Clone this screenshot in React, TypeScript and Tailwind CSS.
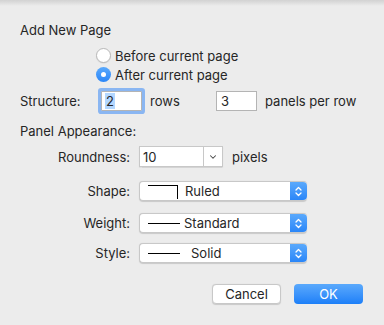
import { ChevronDown } from "lucide-react";

const font = { fontFamily: "Inter, 'Liberation Sans', sans-serif" };

function Radio({ checked, label }: { checked: boolean; label: string }) {
    return (
        <div className="flex items-center h-[19px] gap-[4px]">
            {checked ? (
                <div className="w-[15px] h-[15px] rounded-full bg-gradient-to-b from-[#5aa9fc] to-[#2a86f8] flex items-center justify-center">
                    <div className="w-[5px] h-[5px] rounded-full bg-white" />
                </div>
            ) : (
                <div className="w-[15px] h-[15px] rounded-full bg-white border border-[#b9b9b9] shadow-[0_0.5px_1px_rgba(0,0,0,0.1)]" />
            )}
            <span>{label}</span>
        </div>
    );
}

function Updown() {
    return (
        <div className="w-[17px] self-stretch rounded-r-[4px] bg-gradient-to-b from-[#5aa9fc] to-[#2a86f8] flex items-center justify-center">
            <svg width="7" height="11" viewBox="0 0 7 11" fill="none" stroke="white" strokeWidth="1.3" strokeLinecap="round" strokeLinejoin="round">
                <path d="M1 4 L3.5 1.5 L6 4" />
                <path d="M1 7 L3.5 9.5 L6 7" />
            </svg>
        </div>
    );
}

function Popup({ icon, label, textOffset }: { icon: React.ReactNode; label: string; textOffset: string }) {
    return (
        <div className="w-[168px] h-[20px] flex bg-white rounded-[4px] border border-[#c8c8c8] border-r-0 shadow-[0_0.5px_1px_rgba(0,0,0,0.15)]">
            <div className="flex-1 flex items-center pl-[8px]">
                {icon}
                <span className={textOffset}>{label}</span>
            </div>
            <Updown />
        </div>
    );
}

function Row({ label, children, mt }: { label: string; children: React.ReactNode; mt: string }) {
    return (
        <div className={`flex items-center ${mt}`}>
            <div className="w-[130px] text-right pr-[0px]">{label}</div>
            <div className="ml-[9px] flex items-center">{children}</div>
        </div>
    );
}

export default function App() {
    return (
        <div className="w-[384px] h-[325px] bg-[#ececec] text-[13px] text-[#262626] leading-[16px] flex flex-col" style={font}>
            <div className="h-[6px] bg-gradient-to-b from-[#d2d2d2] to-[#ececec]" />

            <div className="ml-[20px] mt-[16px]">Add New Page</div>

            <div className="ml-[96px] mt-[8px] flex flex-col">
                <Radio checked={false} label="Before current page" />
                <Radio checked={true} label="After current page" />
            </div>

            {/* Structure */}
            <div className="flex items-center mt-[7px] h-[20px]">
                <div className="ml-[20px] w-[81px]">Structure:</div>
                <div className="w-[41px] h-[20px] bg-white border border-[#b4b4b4] ring-[3px] ring-[#8ab6f2] rounded-[1px] flex items-center pl-[3px]">
                    <span className="bg-[#b3d7ff] px-[1px]">2</span>
                </div>
                <div className="ml-[8px] w-[66px]">rows</div>
                <div className="w-[41px] h-[20px] bg-white border border-[#b4b4b4] flex items-center pl-[4px]">3</div>
                <div className="ml-[8px]">panels per row</div>
            </div>

            <div className="ml-[20px] mt-[12px]">Panel Appearance:</div>

            <Row label="Roundness:" mt="mt-[7px]">
                <div className="w-[84px] h-[21px] flex bg-white border border-[#c8c8c8] shadow-[0_0.5px_1px_rgba(0,0,0,0.1)]">
                    <div className="flex-1 flex items-center pl-[3px]">10</div>
                    <div className="w-[19px] border-l border-[#c8c8c8] flex items-center justify-center">
                        <ChevronDown className="w-[10px] h-[10px] text-[#444]" strokeWidth={2.5} />
                    </div>
                </div>
                <span className="ml-[9px]">pixels</span>
            </Row>

            <Row label="Shape:" mt="mt-[14px]">
                <Popup
                    label="Ruled"
                    textOffset="ml-[7px]"
                    icon={<div className="w-[30px] h-[14px] border-t border-r border-black mt-[2px]" />}
                />
            </Row>

            <Row label="Weight:" mt="mt-[12px]">
                <Popup label="Standard" textOffset="ml-[4px]" icon={<div className="w-[32px] h-0 border-t border-black" />} />
            </Row>

            <Row label="Style:" mt="mt-[10px]">
                <Popup label="Solid" textOffset="ml-[11px]" icon={<div className="w-[32px] h-0 border-t border-black" />} />
            </Row>

            <div className="flex justify-end gap-[13px] mr-[21px] mt-[21px]">
                <button className="w-[69px] h-[20px] bg-white rounded-[4px] border border-[#c8c8c8] shadow-[0_0.5px_1px_rgba(0,0,0,0.15)] flex items-center justify-center">
                    Cancel
                </button>
                <button className="w-[69px] h-[20px] rounded-[4px] bg-gradient-to-b from-[#5aa9fc] to-[#1b7ff8] text-white flex items-center justify-center">
                    OK
                </button>
            </div>
        </div>
    );
}
